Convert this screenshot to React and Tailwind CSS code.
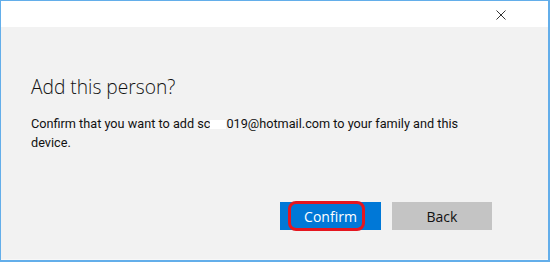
export default function App() {
  return (
    <div className="w-[550px] h-[262px] flex flex-col border-l border-t border-r-2 border-b-2 border-[#63aeea] bg-white" style={{ fontFamily: '"Open Sans", "Noto Sans", sans-serif' }}>
      <div className="h-[26px] flex items-center justify-end pr-[42px] bg-white">
        <svg width="10" height="10" viewBox="0 0 10 10" className="mt-[1px]">
          <path d="M0.5 0.5 L9.5 9.5 M9.5 0.5 L0.5 9.5" stroke="#333" strokeWidth="1" fill="none" />
        </svg>
      </div>
      <div className="flex-1 flex flex-col bg-[#f2f2f2] pl-[30px] pr-[56px] pt-[46px] pb-[29px] border-b border-[#f8f8f8]">
        <div className="text-[19.2px] leading-[28px] font-light text-[#111]">Add this person?</div>
        <div className="mt-[13px] text-[12.7px] leading-[19px] text-[#111]" style={{ fontFamily: 'Roboto, "Open Sans", sans-serif' }}>
          Confirm that you want to add sc<span className="inline-block w-[16px] h-[9px] bg-white align-middle"></span>019@hotmail.com to your family and this device.
        </div>
        <div className="mt-auto flex justify-end gap-[11px]">
          <div className="relative w-[101px] h-[28px] bg-[#0078d7] flex items-center justify-center text-white text-[14px]">
            Confirm
            <div className="absolute left-[8px] right-[16px] top-[-1px] bottom-[-1px] rounded-[8px] border-[3px] border-[#e5161f]"></div>
          </div>
          <div className="w-[100px] h-[28px] bg-[#c4c4c4] flex items-center justify-center text-[#111] text-[14px]">
            Back
          </div>
        </div>
      </div>
    </div>
  );
}
